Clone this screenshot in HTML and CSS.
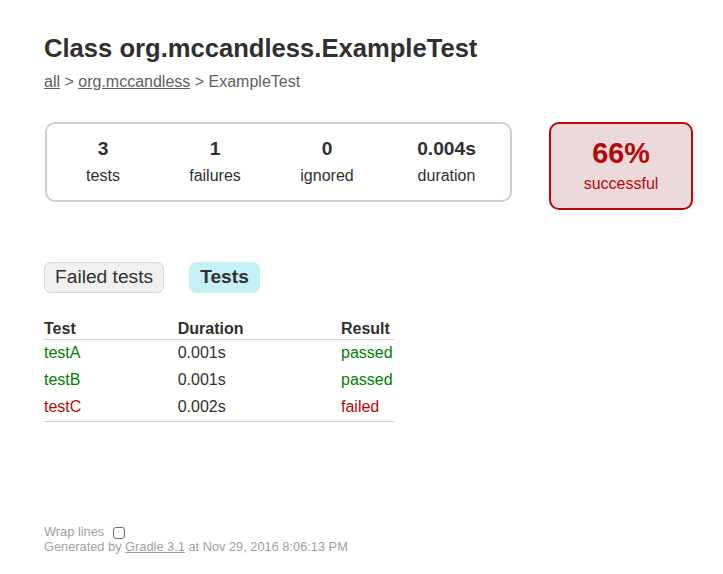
FILE: index.html
```
<!DOCTYPE html>
<html>
<head>
<meta charset="utf-8">
<title>Test results - Class org.mccandless.ExampleTest</title>
<link rel="stylesheet" href="styles.css">
</head>
<body>
<div class="content">
  <h1 class="title">Class org.mccandless.ExampleTest</h1>
  <div class="breadcrumbs">
    <a href="#">all</a> &gt; <a href="#">org.mccandless</a> &gt; ExampleTest
  </div>

  <div class="summary">
    <div class="summary-group">
      <div class="info-box">
        <div class="counter">3</div>
        <p class="info-label">tests</p>
      </div>
      <div class="info-box">
        <div class="counter">1</div>
        <p class="info-label">failures</p>
      </div>
      <div class="info-box">
        <div class="counter">0</div>
        <p class="info-label">ignored</p>
      </div>
      <div class="info-box info-duration">
        <div class="counter">0.004s</div>
        <p class="info-label">duration</p>
      </div>
    </div>
    <div class="success-rate failures">
      <div class="percent">66%</div>
      <p class="info-label">successful</p>
    </div>
  </div>

  <ul class="tab-links">
    <li class="tab"><a href="#">Failed tests</a></li>
    <li class="tab selected"><a href="#">Tests</a></li>
  </ul>

  <table class="results">
    <thead>
      <tr><th>Test</th><th>Duration</th><th>Result</th></tr>
    </thead>
    <tbody>
      <tr><td class="ok">testA</td><td>0.001s</td><td class="ok">passed</td></tr>
      <tr><td class="ok">testB</td><td>0.001s</td><td class="ok">passed</td></tr>
      <tr><td class="bad">testC</td><td>0.002s</td><td class="bad">failed</td></tr>
    </tbody>
  </table>

  <div class="footer">
    <div class="wrap-line">
      <label for="wrap-toggle">Wrap lines</label>
      <input id="wrap-toggle" class="wrap-toggle" type="checkbox">
    </div>
    <div class="generated">Generated by <a href="#">Gradle 3.1</a> at Nov 29, 2016 8:06:13 PM</div>
  </div>
</div>
</body>
</html>
```

FILE: styles.css
```
html, body {
  margin: 0;
  padding: 0;
  background: #ffffff;
}

body {
  font-family: "Liberation Sans", Arial, Helvetica, sans-serif;
  font-size: 16px;
  color: #303030;
}

a, a:visited {
  color: inherit;
}

.content {
  padding: 34px 44px 20px 44px;
}

.title {
  margin: 0 0 10px 0;
  font-size: 25.6px;
  line-height: 29px;
  font-weight: bold;
  white-space: nowrap;
}

.breadcrumbs {
  color: #606060;
  line-height: 18px;
}

.breadcrumbs a {
  color: #606060;
}

.summary {
  display: flex;
  align-items: flex-start;
  margin-top: 31px;
}

.summary-group {
  display: flex;
  flex-shrink: 0;
  margin-left: 1px;
  border: 2px solid #d0d0d0;
  border-radius: 10px;
}

.info-box {
  width: 112px;
  flex-shrink: 0;
  padding: 15px 0;
  text-align: center;
}

.info-duration {
  width: 127px;
}

.counter {
  font-size: 19.2px;
  line-height: 20px;
  font-weight: bold;
  margin-bottom: 8px;
}

.info-label {
  margin: 0;
  line-height: 18px;
}

.success-rate {
  width: 140px;
  flex-shrink: 0;
  margin-left: 37px;
  padding: 15px 0;
  text-align: center;
  border: 2px solid #d0d0d0;
  border-radius: 10px;
}

.success-rate.failures {
  background-color: #ecdada;
  border-color: #b60808;
  color: #b60808;
}

.percent {
  font-size: 28.8px;
  line-height: 28px;
  font-weight: bold;
  margin-bottom: 8px;
}

.tab-links {
  display: flex;
  list-style: none;
  margin: 52px 0 0 0;
  padding: 0;
}

.tab {
  padding: 4px 10px 6px 10px;
  margin-right: 25px;
  border: 1px solid #d4d4d4;
  border-radius: 7px;
  background-color: #f0f0f0;
}

.tab a {
  display: block;
  font-size: 19.2px;
  line-height: 19px;
  text-decoration: none;
  color: #303030;
}

.tab.selected {
  background-color: #c5f0f5;
  border-color: #c5f0f5;
}

.tab.selected a {
  font-weight: bold;
}

.results {
  margin-top: 25px;
  min-width: 350px;
  border-collapse: collapse;
  border-bottom: 1px solid #d0d0d0;
}

.results th {
  text-align: left;
  white-space: nowrap;
  padding: 2px 0 1px 6em;
  line-height: 18px;
  font-weight: bold;
  border-bottom: 1px solid #d0d0d0;
}

.results td {
  white-space: nowrap;
  padding: 4px 0 6px 6em;
  line-height: 17px;
}

.results th:first-child,
.results td:first-child {
  padding-left: 0;
}

.results td.ok {
  color: #008000;
}

.results td.bad {
  color: #b60808;
}

.footer {
  margin-top: 102px;
  font-size: 12.8px;
  line-height: 15px;
  color: #a0a0a0;
  white-space: nowrap;
}

.footer a {
  color: #a0a0a0;
}

.wrap-toggle {
  -webkit-appearance: none;
  appearance: none;
  width: 12px;
  height: 12px;
  margin: -4px 0 -4px 5px;
  vertical-align: middle;
  border: 1px solid #6a6a6a;
  border-radius: 3px;
  background: #ffffff;
  box-sizing: border-box;
}
```
